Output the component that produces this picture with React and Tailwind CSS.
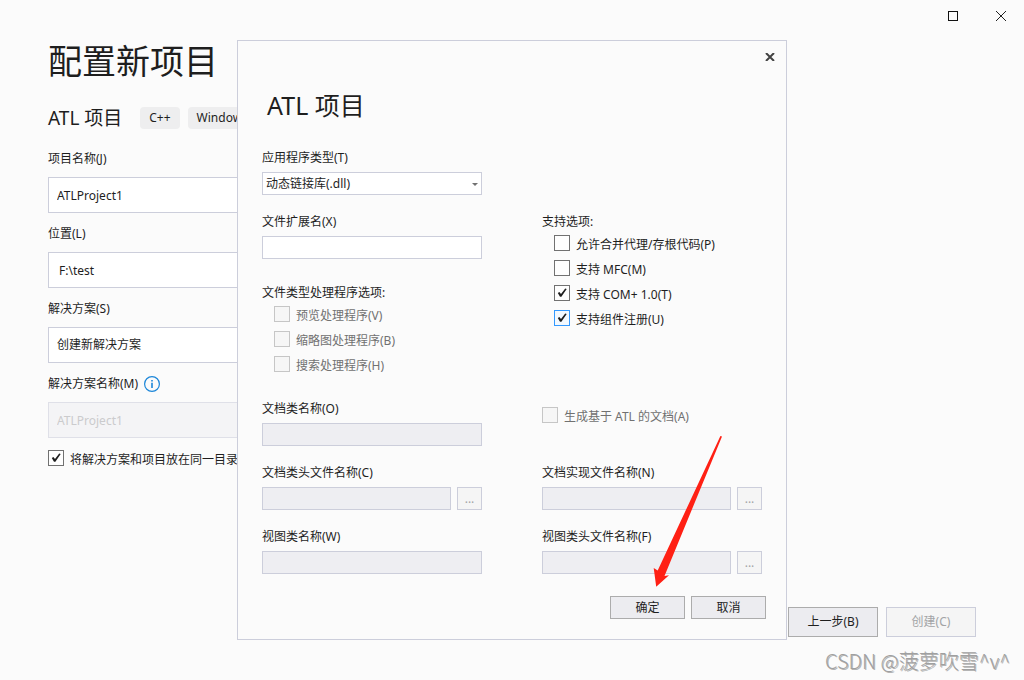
import { useId } from "react"

function Check({ label, disabled, checked, active }) {
  return (
    <label className={`flex items-start gap-1.5 whitespace-nowrap ${disabled ? "text-[#717171]" : "text-[#1e1e1e]"}`}>
      <span className="relative size-4 shrink-0">
        <input
          type="checkbox"
          disabled={disabled}
          defaultChecked={checked}
          className={`peer block size-4 appearance-none border ${
            disabled
              ? "border-[#c6c6c6] bg-[#f6f6f6]"
              : active
                ? "border-[#3399ff] bg-[#f3f9ff]"
                : "border-[#717171] bg-[#fefefe]"
          }`}
        />
        <svg viewBox="0 0 16 16" className="pointer-events-none absolute inset-0 hidden size-4 peer-checked:block">
          <path d="M3.8 7.9 L5.4 6.9 L7 9 L11.2 3.6 L12.7 4 L7.4 11.7 L6 11.7 Z" fill="#1e1e1e" />
        </svg>
      </span>
      <span className="leading-5">{label}</span>
    </label>
  )
}

// Label + text box inside the dialog, with an optional browse button
function Field({ label, disabled, browse }) {
  const id = useId()
  return (
    <div className="flex flex-col gap-[5px]">
      <label htmlFor={id}>{label}</label>
      <div className="flex gap-1.5">
        <input
          id={id}
          type="text"
          disabled={disabled}
          className={`h-[23px] min-w-0 flex-1 border border-[#cccedb] px-1 outline-none ${disabled ? "bg-[#eeeef2]" : "bg-white"}`}
        />
        {browse && (
          <button type="button" disabled className="h-[23px] w-[25px] border border-[#cccedb] bg-[#f5f5f5] text-[#a2a4a5]">
            ...
          </button>
        )}
      </div>
    </div>
  )
}

function AtlDialog() {
  return (
    <section role="dialog" aria-labelledby="dialog-title" className="relative w-[550px] border border-[#cccedb] bg-[#fbfbfb] px-6 pb-5">
      <div className="-mr-4 flex h-8 items-center justify-end">
        <button type="button" aria-label="关闭" className="flex size-4 items-center justify-center">
          <svg viewBox="0 0 10 8" className="h-2 w-2.5">
            <path d="M1 0 L9 8 M9 0 L1 8" stroke="#424242" strokeWidth="2" fill="none" />
          </svg>
        </button>
      </div>

      <h2 id="dialog-title" className="mt-4 mb-7 pl-[5px] text-[25px] leading-8">ATL 项目</h2>

      <form className="grid grid-cols-2 gap-x-[60px]">
        <div className="flex flex-col gap-[5px]">
          <label htmlFor="app-type">应用程序类型(T)</label>
          <div className="relative">
            <select id="app-type" className="block h-[23px] w-full appearance-none border border-[#cccedb] bg-white px-[3px] outline-none">
              <option>动态链接库(.dll)</option>
            </select>
            <svg viewBox="0 0 6 3" className="pointer-events-none absolute top-[11px] right-1 h-[3px] w-1.5">
              <path d="M0 0 H6 L3 3 Z" fill="#717171" />
            </svg>
          </div>
        </div>

        <div className="col-start-1 mt-[18px]">
          <Field label="文件扩展名(X)" />
          <fieldset className="mt-[25px]">
            <legend>文件类型处理程序选项:</legend>
            <div className="mt-1 flex flex-col gap-[5px] pl-3">
              <Check label="预览处理程序(V)" disabled />
              <Check label="缩略图处理程序(B)" disabled />
              <Check label="搜索处理程序(H)" disabled />
            </div>
          </fieldset>
        </div>
        <fieldset className="mt-[18px]">
          <legend>支持选项:</legend>
          <div className="mt-1 flex flex-col gap-[5px] pl-3">
            <Check label="允许合并代理/存根代码(P)" />
            <Check label="支持 MFC(M)" />
            <Check label="支持 COM+ 1.0(T)" checked />
            <Check label="支持组件注册(U)" checked active />
          </div>
        </fieldset>

        <div className="mt-6">
          <Field label="文档类名称(O)" disabled />
        </div>
        <div className="mt-[31px]">
          <Check label="生成基于 ATL 的文档(A)" disabled />
        </div>

        <div className="mt-[18px] flex flex-col gap-[18px]">
          <Field label="文档类头文件名称(C)" disabled browse />
          <Field label="视图类名称(W)" disabled />
        </div>
        <div className="mt-[18px] flex flex-col gap-[18px]">
          <Field label="文档实现文件名称(N)" disabled browse />
          <Field label="视图类头文件名称(F)" disabled browse />
        </div>
      </form>

      <div className="-mr-1 mt-[22px] flex justify-end gap-1.5">
        <button type="button" className="h-[23px] w-[75px] border border-[#acacac] bg-[#ececf0]">确定</button>
        <button type="button" className="h-[23px] w-[75px] border border-[#acacac] bg-[#ececf0]">取消</button>
      </div>

      {/* Red arrow pointing at the confirm button */}
      <svg viewBox="0 0 70 152" className="pointer-events-none absolute right-16 bottom-[52px] h-[152px] w-[70px]">
        <path d="M68.4 1 L70 1.4 L12.5 141 L17 140.3 L4.2 151.8 L1.7 133 L5.7 135.5 Z" fill="#ff2014" />
      </svg>
    </section>
  )
}

export default function App() {
  return (
    <div className="relative flex min-h-screen flex-col overflow-hidden bg-[#fbfbfb] font-['Noto_Sans','Noto_Sans_CJK_SC',sans-serif] text-xs leading-[18px] text-[#1e1e1e]">
      <header className="flex h-8 justify-end gap-0.5">
        <button type="button" aria-label="最大化" className="flex w-[46px] items-center justify-center">
          <svg viewBox="0 0 10 10" className="size-2.5">
            <rect x="0.5" y="0.5" width="9" height="9" fill="none" stroke="#111" />
          </svg>
        </button>
        <button type="button" aria-label="关闭窗口" className="flex w-[46px] items-center justify-center">
          <svg viewBox="0 0 10 10" className="size-2.5">
            <path d="M0 0 L10 10 M10 0 L0 10" fill="none" stroke="#222" />
          </svg>
        </button>
      </header>

      <main className="flex-1 px-12">
        <h1 className="mt-[7px] text-[34px] leading-11">配置新项目</h1>
        <div className="mt-[23px] flex items-center gap-2">
          <h2 className="mr-2.5 text-[19px] leading-6">ATL 项目</h2>
          <span className="rounded bg-[#eeeeef] px-[9px] py-0.5">C++</span>
          <span className="rounded bg-[#eeeeef] px-[9px] py-0.5">Windows</span>
        </div>

        <div className="mt-5 flex max-w-[640px] flex-col gap-3">
          <div className="flex flex-col gap-[9px]">
            <label htmlFor="project-name">项目名称(J)</label>
            <input id="project-name" type="text" defaultValue="ATLProject1" className="h-9 border border-[#cccedb] bg-white px-2 outline-none" />
          </div>
          <div className="flex flex-col gap-[9px]">
            <label htmlFor="location">位置(L)</label>
            <input id="location" type="text" defaultValue="F:\test" className="h-9 border border-[#cccedb] bg-white px-2.5 outline-none" />
          </div>
          <div className="flex flex-col gap-[9px]">
            <label htmlFor="solution">解决方案(S)</label>
            <select id="solution" className="h-9 appearance-none border border-[#cccedb] bg-white px-2 outline-none">
              <option>创建新解决方案</option>
            </select>
          </div>
          <div className="flex flex-col gap-[9px]">
            <div className="flex items-center gap-1.5">
              <label htmlFor="solution-name">解决方案名称(M)</label>
              <svg viewBox="0 0 16 16" className="size-4">
                <circle cx="8" cy="8" r="7.4" fill="none" stroke="#1c86d9" strokeWidth="1.2" />
                <path d="M8 4 V5.6 M8 6.8 V12" stroke="#1c86d9" strokeWidth="1.6" />
              </svg>
            </div>
            <input id="solution-name" type="text" disabled defaultValue="ATLProject1" className="h-9 border border-[#dfe0e8] bg-[#f4f4f6] px-2 text-[#cbcbcd]" />
          </div>
          <Check label="将解决方案和项目放在同一目录中(D)" checked />
        </div>
      </main>

      <footer className="flex justify-end gap-2 px-12 pb-[43px]">
        <button type="button" className="h-[30px] w-[90px] border border-[#acacac] bg-[#ececf0]">上一步(B)</button>
        <button type="button" disabled className="h-[30px] w-[90px] border border-[#cccedb] bg-[#f5f5f5] text-[#a2a4a5]">创建(C)</button>
      </footer>

      <div className="absolute inset-0 flex items-center justify-center">
        <AtlDialog />
      </div>

      <p className="pointer-events-none absolute right-3.5 bottom-[7px] font-['Noto_Sans_CJK_SC',sans-serif] text-xl leading-6 font-light text-[#a0a0a0] [text-shadow:1px_1px_0_#b4b4b4]">
        CSDN @菠萝吹雪^v^
      </p>
    </div>
  )
}
